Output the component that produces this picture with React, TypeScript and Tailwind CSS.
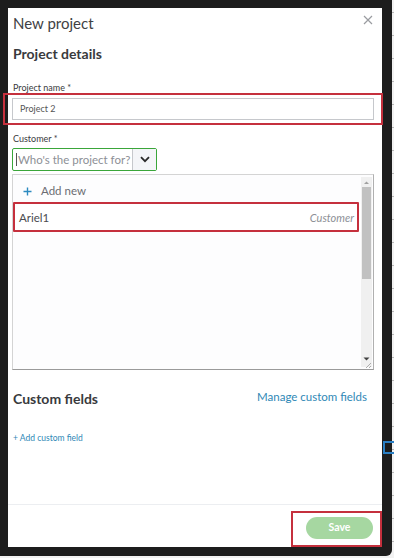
import React from "react";

const font = { fontFamily: "Lato, 'Open Sans', 'Liberation Sans', sans-serif" };

export default function App() {
  return (
    <div className="relative w-[394px] h-[558px] bg-[#f2f2f2] overflow-hidden" style={font}>
      {/* background ticks */}
      <div className="absolute right-0 top-0 w-[2px] h-full flex flex-col gap-[22px] pt-[12px]">
        {Array.from({ length: 24 }).map((_, i) => (
          <div key={i} className="h-px bg-[#b8b8b8]" />
        ))}
      </div>
      <div className="w-[392px] h-[556px] bg-[#1d1d1d] rounded-br-[6px] pt-[8px] pl-[8px]">
        <div className="w-[374px] h-[539px] bg-white flex flex-col">
          <div className="pl-[4px] pr-[9px]">
            <div className="flex justify-between items-start pt-[5px]">
              <div className="ml-[1px] text-[15px] leading-[20px] text-[#404144]">New project</div>
              <svg width="10" height="10" viewBox="0 0 10 10" className="mt-[2px]">
                <path d="M1 1 L9 9 M9 1 L1 9" stroke="#9a9ca0" strokeWidth="1.2" />
              </svg>
            </div>
            <div className="ml-[1px] mt-[12px] text-[14px] leading-[18px] font-bold text-[#393a3d]">Project details</div>
            <div className="ml-[1px] mt-[19px] text-[9px] leading-[12px] text-[#393a3d]">Project name *</div>
            <div className="mt-[4px] w-[362px] h-[22px] border border-[#c6c8cc] flex items-center pl-[7px] text-[9px] text-[#555]">
              Project 2
            </div>
            <div className="ml-[1px] mt-[13px] text-[9px] leading-[12px] text-[#393a3d]">Customer *</div>
            <div className="mt-[3px] w-[145px] h-[23px] border border-[#3aa63a] rounded-[2px] flex">
              <div className="flex-1 flex items-center pl-[3px] text-[11.5px] text-[#8d9096] border-r border-[#c6c8cc]">
                <span className="w-px h-[13px] bg-[#555] mr-[1px]" />
                Who's the project for?
              </div>
              <div className="w-[23px] flex items-center justify-center bg-[#f4f5f8]">
                <svg width="10" height="7" viewBox="0 0 10 7">
                  <path d="M1 1.2 L5 5.2 L9 1.2" stroke="#2a2a2a" strokeWidth="1.8" fill="none" />
                </svg>
              </div>
            </div>
            {/* dropdown */}
            <div className="relative mt-[3px] w-[362px] h-[196px] border border-[#d4d4d4] border-b-[#9a9a9a] border-r-[#b0b0b0] bg-[#fdfdfe] flex">
              <div className="flex-1 flex flex-col pt-[5px] pl-[1px]">
                <div className="h-[22px] flex items-center pl-[9px] text-[11.5px] text-[#6b6c72]">
                  <svg width="9" height="9" viewBox="0 0 9 9" className="mr-[9px]">
                    <path d="M4.5 0.5 V8.5 M0.5 4.5 H8.5" stroke="#2c8ac0" strokeWidth="1.4" />
                  </svg>
                  Add new
                </div>
                <div className="mt-[2px] h-[28px] flex items-center justify-between pl-[5px] pr-[7px] bg-white">
                  <span className="text-[11.5px] text-[#4a4b4f]">Ariel1</span>
                  <span className="text-[11px] italic text-[#8d9096]">Customer</span>
                </div>
              </div>
              <div className="w-[11px] mr-[1px] my-[2px] bg-[#f0f0f0] flex flex-col items-center">
                <svg width="7" height="8" viewBox="0 0 7 8" className="mt-[2px]">
                  <path d="M1 5 L3.5 2.5 L6 5 Z" fill="#a0a0a0" />
                </svg>
                <div className="w-[9px] h-[92px] bg-[#c1c1c1]" />
                <div className="flex-1" />
                <svg width="7" height="8" viewBox="0 0 7 8" className="mb-[4px]">
                  <path d="M0.5 2.5 L6.5 2.5 L3.5 5.5 Z" fill="#404040" />
                </svg>
              </div>
              <svg width="7" height="7" viewBox="0 0 7 7" className="absolute right-[1px] bottom-[0px]">
                <path d="M6 1 L1 6 M6 4 L4 6" stroke="#9a9a9a" strokeWidth="0.8" />
              </svg>
            </div>
            <div className="mt-[20px] flex justify-between items-start">
              <div className="ml-[1px] text-[14px] leading-[18px] font-bold text-[#393a3d]">Custom fields</div>
              <div className="text-[11.5px] leading-[14px] text-[#2f88b6] mr-[6px]">Manage custom fields</div>
            </div>
            <div className="ml-[1px] mt-[24px] text-[8.5px] leading-[12px] text-[#2f88b6]">+ Add custom field</div>
          </div>
          <div className="flex-1" />
          <div className="h-[43px] border-t border-[#eceef1] flex justify-end items-start pt-[12px] pr-[9px]">
            <div className="w-[67px] h-[22px] rounded-full bg-[#a6d7a1] flex items-center justify-center text-white text-[10.5px] font-bold">
              Save
            </div>
          </div>
        </div>
      </div>
      {/* annotation overlays */}
      <div className="absolute left-[3px] top-[93px] w-[380px] h-[32px] border-[2.5px] border-[#c5303d]" />
      <div className="absolute left-[13px] top-[202px] w-[346px] h-[30px] border-[2.5px] border-[#c5303d] rounded-[1px]" />
      <div className="absolute left-[291px] top-[511px] w-[91px] h-[36px] border-[2.5px] border-[#c5303d]" />
      <div className="absolute left-[383px] top-[441px] w-[14px] h-[13px] border-[2px] border-[#2a7fc4]" />
    </div>
  );
}
